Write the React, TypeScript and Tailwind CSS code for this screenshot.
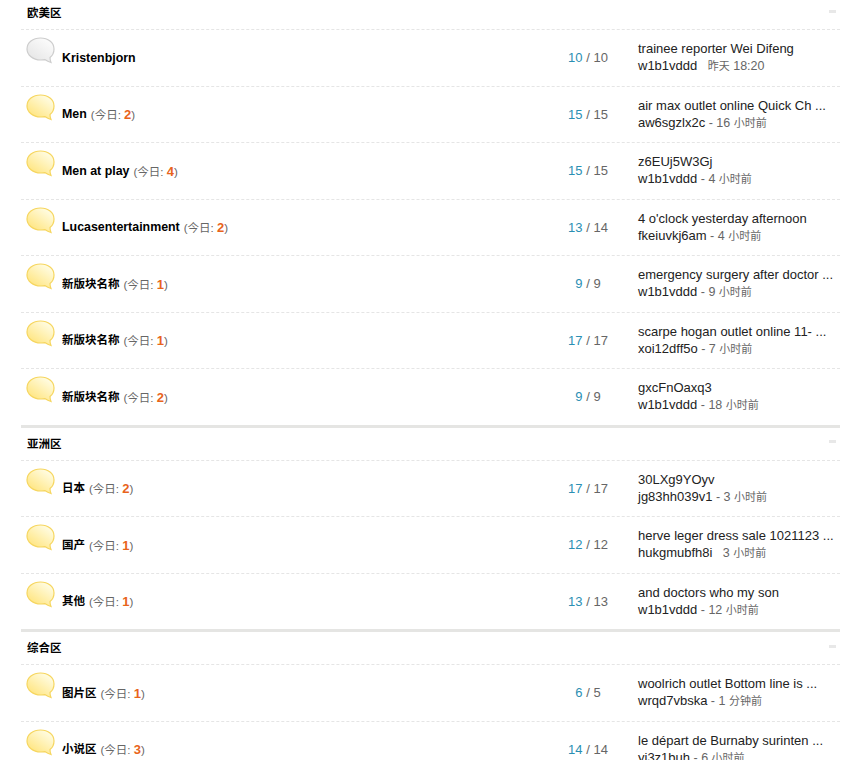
const FONT = "font-['Liberation_Sans','Noto_Sans_CJK_SC',sans-serif]";

type Forum = {
  name: string;
  today?: number;
  topics: number;
  posts: number;
  title: string;
  author: string;
  when: string;
  idle?: boolean;
};

type Group = { name: string; forums: Forum[] };

const GROUPS: Group[] = [
  {
    name: "欧美区",
    forums: [
      { name: "Kristenbjorn", topics: 10, posts: 10, title: "trainee reporter Wei Difeng", author: "w1b1vddd", when: "\u00a0\u00a0 昨天 18:20", idle: true },
      { name: "Men", today: 2, topics: 15, posts: 15, title: "air max outlet online Quick Ch ...", author: "aw6sgzlx2c", when: " - 16 小时前" },
      { name: "Men at play", today: 4, topics: 15, posts: 15, title: "z6EUj5W3Gj", author: "w1b1vddd", when: " - 4 小时前" },
      { name: "Lucasentertainment", today: 2, topics: 13, posts: 14, title: "4 o'clock yesterday afternoon", author: "fkeiuvkj6am", when: " - 4 小时前" },
      { name: "新版块名称", today: 1, topics: 9, posts: 9, title: "emergency surgery after doctor ...", author: "w1b1vddd", when: " - 9 小时前" },
      { name: "新版块名称", today: 1, topics: 17, posts: 17, title: "scarpe hogan outlet online 11- ...", author: "xoi12dff5o", when: " - 7 小时前" },
      { name: "新版块名称", today: 2, topics: 9, posts: 9, title: "gxcFnOaxq3", author: "w1b1vddd", when: " - 18 小时前" },
    ],
  },
  {
    name: "亚洲区",
    forums: [
      { name: "日本", today: 2, topics: 17, posts: 17, title: "30LXg9YOyv", author: "jg83hh039v1", when: " - 3 小时前" },
      { name: "国产", today: 1, topics: 12, posts: 12, title: "herve leger dress sale 1021123 ...", author: "hukgmubfh8i", when: "\u00a0\u00a0 3 小时前" },
      { name: "其他", today: 1, topics: 13, posts: 13, title: "and doctors who my son", author: "w1b1vddd", when: " - 12 小时前" },
    ],
  },
  {
    name: "综合区",
    forums: [
      { name: "图片区", today: 1, topics: 6, posts: 5, title: "woolrich outlet Bottom line is ...", author: "wrqd7vbska", when: " - 1 分钟前" },
      { name: "小说区", today: 3, topics: 14, posts: 14, title: "le départ de Burnaby surinten ...", author: "yi3z1buh", when: " - 6 小时前" },
    ],
  },
];

const CJK = /[\u4e00-\u9fff]/;

function Bubble({ idle, id }: { idle?: boolean; id: string }) {
  const stops = idle ? ["#fbfbfb", "#e6e6e6"] : ["#fffce2", "#ffe57f"];
  const stroke = idle ? "#cdcdcd" : "#f6d65f";
  return (
    <svg width="29" height="27" viewBox="0 0 29 27" className="shrink-0 block">
      <defs>
        <linearGradient id={id} x1="0.8" y1="0.1" x2="0.2" y2="0.9">
          <stop offset="0" stopColor={stops[0]} />
          <stop offset="1" stopColor={stops[1]} />
        </linearGradient>
      </defs>
      <path
        d="M14.500 1C22 1 28 5.500 28 12C28 16 26 19 24 20.500C24 22.500 24.500 24.500 25 25.500C23 25 20.500 23.800 18.800 22.600C17.400 22.900 16 23 14.500 23C7 23 1 18 1 12C1 5.500 7 1 14.500 1z"
        fill={`url(#${id})`}
        stroke={stroke}
        strokeWidth="1.200"
      />
    </svg>
  );
}

function ForumRow({ forum, id }: { forum: Forum; id: string }) {
  const nameSize = CJK.test(forum.name) ? "text-[11.5px]" : "text-[12.4px]";
  return (
    <div className="flex h-[56.5px] border-t border-dashed border-[#e5e5e5] pl-[5px]">
      <div className="w-[36px] pt-[7px]">
        <Bubble idle={forum.idle} id={id} />
      </div>
      <div className="flex-1 flex items-center text-[11.5px] text-[#666] pt-[1px]">
        <span className={`font-bold text-black ${nameSize}`}>{forum.name}</span>
        {forum.today !== undefined && (
          <span className="ml-[4px]">
            (今日: <span className="font-bold text-[13px] text-[#e8641b]">{forum.today}</span>)
          </span>
        )}
      </div>
      <div className="w-[100px] flex items-center justify-center text-[13px] text-[#666]">
        <span className="text-[#2b8fb3]">{forum.topics}</span>
        <span>&nbsp;/&nbsp;{forum.posts}</span>
      </div>
      <div className="w-[202px] flex flex-col justify-center text-[13px] leading-[17px]">
        <div className="text-[#222] whitespace-nowrap">{forum.title}</div>
        <div className="text-[#666] whitespace-pre">
          <span className="text-[#222]">{forum.author}</span>
          {forum.when.split(/([\u4e00-\u9fff]+)/).map((part, i) =>
            i % 2 === 1 ? (
              <span key={i} className="text-[11px]">{part}</span>
            ) : (
              <span key={i} className="text-[12.5px]">{part}</span>
            ),
          )}
        </div>
      </div>
    </div>
  );
}

export default function App() {
  return (
    <div className={`${FONT} h-[760px] overflow-hidden bg-white pl-[21px] pr-[22px]`}>
      {GROUPS.map((group, g) => (
        <div key={group.name} className="border-b-[3px] border-[#e5e5e3] last:border-b-0">
          <div
            className={
              g === 0
                ? "flex items-center justify-between pl-[6px] pr-[4px] h-[29px] pt-[1px] pb-[6px]"
                : "flex items-center justify-between pl-[6px] pr-[4px] h-[32px] pt-[1px] pb-[3px]"
            }
          >
            <span className="font-bold text-[11.5px] text-black mt-[4px]">{group.name}</span>
            <span className="w-[7px] h-[3px] mb-[2px] bg-[#e8e8e8]" />
          </div>
          {group.forums.map((forum, i) => (
            <ForumRow key={i} forum={forum} id={`bubble-${g}-${i}`} />
          ))}
        </div>
      ))}
    </div>
  );
}
